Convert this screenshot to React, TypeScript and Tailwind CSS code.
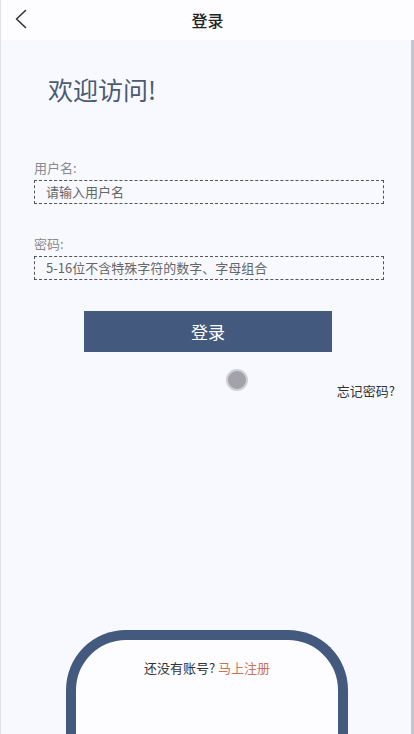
import React from "react";

export default function App() {
  const font = { fontFamily: '"Noto Sans CJK SC", "Noto Sans", sans-serif' };
  return (
    <div
      className="relative w-[414px] h-[734px] overflow-hidden flex flex-col border-l border-[#e2e2e8] bg-[#f8f9fe]"
      style={font}
    >
      {/* Header */}
      <div className="relative h-[40px] shrink-0 flex items-center justify-center bg-[#fdfcff]">
        <svg
          className="absolute left-[13px] top-[9px]"
          width="14"
          height="20"
          viewBox="0 0 14 20"
          fill="none"
        >
          <path d="M11.5 1.5 L2.5 10 L11.5 18.5" stroke="#333" strokeWidth="1.6" strokeLinecap="round" strokeLinejoin="round" />
        </svg>
        <span className="text-[16px] leading-[20px] font-medium text-[#222]">登录</span>
      </div>

      {/* Body */}
      <div className="flex-1 flex flex-row min-h-0">
        <div className="relative flex-1 flex flex-col min-h-0">
          <div className="ml-[47px] mt-[32px] text-[25px] leading-[34px] text-[#4b5b74]">欢迎访问!</div>

          <div className="ml-[33px] mt-[53px] text-[13px] leading-[18px] text-[#8a8a8e]">用户名:</div>
          <div className="ml-[33px] mr-[27px] mt-[3px] h-[24px] border border-dashed border-[#555] flex items-center pl-[11px] text-[13px] text-[#666]">
            请输入用户名
          </div>

          <div className="ml-[33px] mt-[31px] text-[13px] leading-[18px] text-[#8a8a8e]">密码:</div>
          <div className="ml-[33px] mr-[27px] mt-[3px] h-[24px] border border-dashed border-[#555] flex items-center pl-[11px] text-[13px] text-[#666]">
            5-16位不含特殊字符的数字、字母组合
          </div>

          <div className="ml-[83px] w-[248px] mt-[31px] h-[41px] bg-[#435a7e] flex items-center justify-center text-white text-[17px]">
            登录
          </div>

          <div className="mt-[30px] self-end mr-[16px] text-[13px] leading-[18px] text-[#333]">忘记密码?</div>

          <div className="mt-auto ml-[65px] w-[282px] h-[104px] shrink-0 rounded-t-[60px] border-[10px] border-b-0 border-[#435a7e] bg-[#fdfcff] flex justify-center pt-[19px]">
            <span className="text-[13px] leading-[18px] text-[#333]">
              还没有账号? <span className="text-[#c9755b]">马上注册</span>
            </span>
          </div>

          {/* touch indicator */}
          <div className="absolute left-[225px] top-[329px] w-[22px] h-[22px] rounded-full bg-[#a3a2aa] border-2 border-[#cfcfd4]" />
        </div>
        <div className="w-[3px] shrink-0 bg-[#c6c5cf]" />
      </div>
    </div>
  );
}
